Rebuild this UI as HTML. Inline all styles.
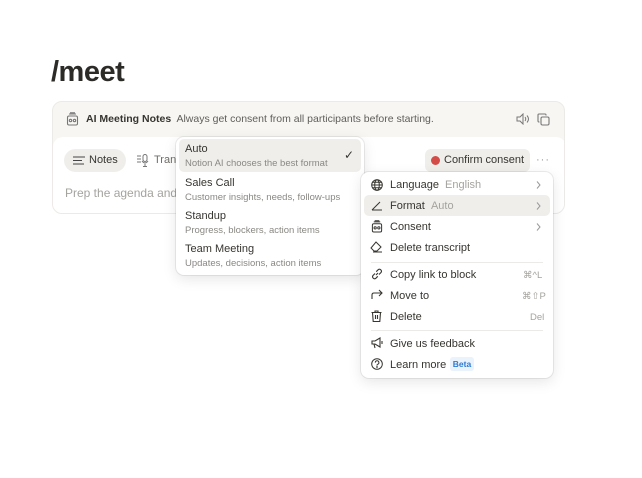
<!DOCTYPE html>
<html><head><style>
*{margin:0;padding:0;box-sizing:border-box}
body{width:642px;height:478px;background:#fff;font-family:"Liberation Sans",sans-serif;color:#37352f;position:relative;overflow:hidden}
.abs{position:absolute}
h1{position:absolute;left:51px;top:56px;font-size:29px;font-weight:700;color:#2c2b28;letter-spacing:-0.5px}
.card{left:52px;top:101px;width:513px;height:113px;border:1px solid #ebeae6;border-radius:10px;background:#f7f6f3;overflow:hidden}
.inner{left:0;top:35px;width:513px;height:80px;background:#fff;border-radius:10px}
.menu{background:#fff;border-radius:8px;box-shadow:0 0 0 1px rgba(0,0,0,.07),0 4px 14px rgba(0,0,0,.1)}
.it{position:absolute;font-size:11px;color:#37352f;white-space:nowrap}
.sub{font-size:9.5px;color:#8a8883;margin-top:3px}
.gray{color:#a5a39e}
svg{position:absolute}
.chev{position:absolute;left:175px}
</style></head><body>
<h1>/meet</h1>
<div class="abs card">
  <svg style="left:13px;top:10px" width="13" height="14" viewBox="0 0 13 14" fill="none" stroke="#777" stroke-width="1.1"><rect x="1.5" y="4" width="10" height="9" rx="1.5"/><path d="M3 2h7M4 0.8h5"/><circle cx="4.5" cy="8.5" r="1.2"/><circle cx="8.5" cy="8.5" r="1.2"/></svg>
  <div class="it" style="left:33px;top:11px;font-size:10.5px;color:#5f5e5b"><b style="color:#37352f">AI Meeting Notes</b>&nbsp; Always get consent from all participants before starting.</div>
  <svg style="left:463px;top:11px" width="14" height="12" viewBox="0 0 14 12" fill="none" stroke="#777" stroke-width="1"><path d="M1 4h3l3-3v10L4 8H1z"/><path d="M9 4q1.5 2 0 4M11 2.5q3 3.5 0 7"/></svg>
  <svg style="left:484px;top:11px" width="13" height="13" viewBox="0 0 13 13" fill="none" stroke="#777" stroke-width="1.1"><rect x="4" y="4" width="8" height="8" rx="1.5"/><path d="M2.5 9H2a1 1 0 0 1-1-1V2a1 1 0 0 1 1-1h6a1 1 0 0 1 1 1v.5"/></svg>
  <div class="abs inner">
    <div class="abs" style="left:11px;top:12px;width:62px;height:23px;background:#efeeeb;border-radius:12px"></div>
    <svg style="left:20px;top:19px" width="12" height="9" viewBox="0 0 12 9" stroke="#444" stroke-width="1.1"><path d="M0 1h12M0 4.5h9M0 8h11"/></svg>
    <div class="it" style="left:36px;top:17px;color:#37352f">Notes</div>
    <svg style="left:84px;top:17px" width="13" height="13" viewBox="0 0 13 13" fill="none" stroke="#777" stroke-width="1"><path d="M0 2h4M0 5h4M0 8h4"/><rect x="6" y="0.5" width="4" height="7" rx="2"/><path d="M5 7q3 4 6 0M8 10v2M6 12.5h4"/></svg>
    <div class="it" style="left:101px;top:17px;color:#6f6e69">Transcript</div>
    <div class="it" style="left:12px;top:49px;font-size:12px;color:#a5a39e">Prep the agenda and</div>
    <div class="abs" style="left:372px;top:12px;width:105px;height:23px;background:#efeeeb;border-radius:6px"></div>
    <div class="abs" style="left:378px;top:19px;width:9px;height:9px;border-radius:50%;background:#d44c47"></div>
    <div class="it" style="left:391px;top:17px;color:#37352f">Confirm consent</div>
    <div class="it" style="left:483px;top:17px;color:#999;letter-spacing:1px">···</div>
  </div>
</div>

<div class="abs menu" style="left:176px;top:137px;width:188px;height:138px">
  <div class="abs" style="left:3px;top:2px;width:182px;height:33px;background:#efeeeb;border-radius:5px"></div>
  <div class="it" style="left:9px;top:6px">Auto<div class="sub">Notion AI chooses the best format</div></div>
  <div class="it" style="left:168px;top:11px;font-size:12px">✓</div>
  <div class="it" style="left:9px;top:40px">Sales Call<div class="sub">Customer insights, needs, follow-ups</div></div>
  <div class="it" style="left:9px;top:73px">Standup<div class="sub">Progress, blockers, action items</div></div>
  <div class="it" style="left:9px;top:106px">Team Meeting<div class="sub">Updates, decisions, action items</div></div>
</div>

<div class="abs menu" style="left:361px;top:172px;width:192px;height:206px">
  <div class="abs" style="left:3px;top:23px;width:186px;height:21px;background:#efeeeb;border-radius:5px"></div>
  <svg style="left:10px;top:7px" width="12" height="12" viewBox="0 0 12 12" fill="none" stroke="#37352f" stroke-width="1"><circle cx="6" cy="6" r="5.3"/><ellipse cx="6" cy="6" rx="2.3" ry="5.3"/><path d="M0.7 6h10.6M1.5 3.3h9M1.5 8.7h9"/></svg>
  <div class="it" style="left:29px;top:7px">Language <span class="gray">&nbsp;English</span></div>
  <svg class="chev" style="top:9px" width="5" height="8" viewBox="0 0 5 8" fill="none" stroke="#999" stroke-width="1"><path d="M1 0.5l3 3.5-3 3.5"/></svg>
  <svg style="left:10px;top:28px" width="12" height="11" viewBox="0 0 12 11" fill="none" stroke="#37352f" stroke-width="1"><path d="M1 10h10M1 10l8-8"/></svg>
  <div class="it" style="left:29px;top:28px">Format <span class="gray">&nbsp;Auto</span></div>
  <svg class="chev" style="top:30px" width="5" height="8" viewBox="0 0 5 8" fill="none" stroke="#999" stroke-width="1"><path d="M1 0.5l3 3.5-3 3.5"/></svg>
  <svg style="left:10px;top:48px" width="12" height="13" viewBox="0 0 13 14" fill="none" stroke="#37352f" stroke-width="1.1"><rect x="1.5" y="4" width="10" height="9" rx="1.5"/><path d="M3 2h7M4 0.8h5"/><circle cx="4.5" cy="8.5" r="1.2"/><circle cx="8.5" cy="8.5" r="1.2"/></svg>
  <div class="it" style="left:29px;top:49px">Consent</div>
  <svg class="chev" style="top:51px" width="5" height="8" viewBox="0 0 5 8" fill="none" stroke="#999" stroke-width="1"><path d="M1 0.5l3 3.5-3 3.5"/></svg>
  <svg style="left:9px;top:69px" width="13" height="12" viewBox="0 0 13 12" fill="none" stroke="#37352f" stroke-width="1"><path d="M1 7l5-6 5 5-4 4H4z"/><path d="M3 11h9"/></svg>
  <div class="it" style="left:29px;top:70px">Delete transcript</div>
  <div class="abs" style="left:10px;top:90px;width:172px;height:1px;background:#ebeae6"></div>
  <svg style="left:10px;top:96px" width="12" height="12" viewBox="0 0 12 12" fill="none" stroke="#37352f" stroke-width="1.1"><path d="M5 7l2-2M4 5.5l-2 2a2 2 0 0 0 2.8 2.8l2-2M8 6.5l2-2a2 2 0 0 0-2.8-2.8l-2 2"/></svg>
  <div class="it" style="left:29px;top:97px">Copy link to block</div>
  <div class="it gray" style="left:162px;top:98px;font-size:9.5px">⌘^L</div>
  <svg style="left:10px;top:117px" width="12" height="11" viewBox="0 0 12 11" fill="none" stroke="#37352f" stroke-width="1.1"><path d="M1 10V6q0-2 2-2h8M8 1l3 3-3 3"/></svg>
  <div class="it" style="left:29px;top:118px">Move to</div>
  <div class="it gray" style="left:161px;top:119px;font-size:9.5px">⌘⇧P</div>
  <svg style="left:10px;top:138px" width="11" height="12" viewBox="0 0 11 12" fill="none" stroke="#37352f" stroke-width="1.1"><path d="M0.5 2.5h10M4 2.5V1h3v1.5M1.5 2.5l.7 9h6.6l.7-9M4.5 5v4M6.5 5v4"/></svg>
  <div class="it" style="left:29px;top:139px">Delete</div>
  <div class="it gray" style="left:169px;top:140px;font-size:9.5px">Del</div>
  <div class="abs" style="left:10px;top:158px;width:172px;height:1px;background:#ebeae6"></div>
  <svg style="left:10px;top:165px" width="13" height="12" viewBox="0 0 13 12" fill="none" stroke="#37352f" stroke-width="1.1"><path d="M1 4h3l5-3v9L4 7H1zM3 7l1 4M11 4v3"/></svg>
  <div class="it" style="left:29px;top:166px">Give us feedback</div>
  <svg style="left:10px;top:186px" width="12" height="12" viewBox="0 0 12 12" fill="none" stroke="#37352f" stroke-width="1"><circle cx="6" cy="6" r="5.3"/><path d="M4.3 4.6a1.8 1.8 0 1 1 2.3 1.7c-.5.2-.6.5-.6 1v.3"/><circle cx="6" cy="9" r=".4" fill="#37352f"/></svg>
  <div class="it" style="left:29px;top:187px">Learn more</div>
  <div class="abs" style="left:89px;top:185px;width:24px;height:14px;background:#eaf2fb;border-radius:3px;color:#2e7ad1;font-size:8.5px;font-weight:700;text-align:center;line-height:14px">Beta</div>
</div>
</body></html>
